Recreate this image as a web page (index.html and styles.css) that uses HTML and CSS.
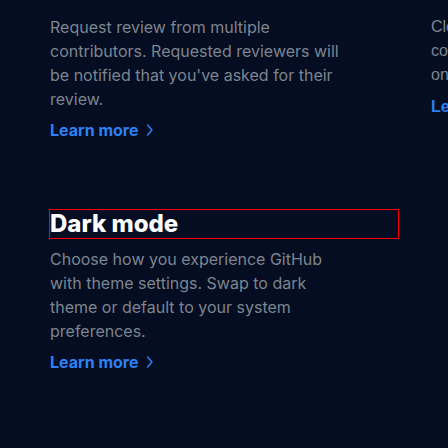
FILE: index.html
```html
<!DOCTYPE html>
<html lang="en">
<head>
<meta charset="utf-8">
<title>Features</title>
<link rel="stylesheet" href="styles.css">
</head>
<body>
<main class="grid">
  <section class="card">
    <p class="desc">Request review from multiple contributors. Requested reviewers will be notified that you've asked for their review.</p>
    <a class="link" href="#">Learn more <svg class="chev" width="16" height="16" viewBox="0 0 16 16"><path d="M6.5 3l4.5 5-4.5 5" fill="none" stroke="currentColor" stroke-width="1.4" stroke-linecap="round" stroke-linejoin="round"/></svg></a>
  </section>
  <section class="card alt">
    <p class="desc">Clearly define who is responsible for code and automatically request reviews on each pull request.</p>
    <a class="link" href="#">Learn more</a>
  </section>
  <section class="card">
    <h3 class="title">Dark mode</h3>
    <p class="desc">Choose how you experience GitHub with theme settings. Swap to dark theme or default to your system preferences.</p>
    <a class="link" href="#">Learn more <svg class="chev" width="16" height="16" viewBox="0 0 16 16"><path d="M6.5 3l4.5 5-4.5 5" fill="none" stroke="currentColor" stroke-width="1.4" stroke-linecap="round" stroke-linejoin="round"/></svg></a>
  </section>
</main>
</body>
</html>
```
FILE: styles.css
```css
html, body {
  margin: 0;
  background: #040d21;
}
body {
  font-family: Inter, "Noto Sans", sans-serif;
  overflow: hidden;
}
.grid {
  display: grid;
  grid-template-columns: 350px 350px;
  column-gap: 31px;
  row-gap: 68px;
  padding: 15px 0 0 50px;
}
.card {
  display: flex;
  flex-direction: column;
  align-items: flex-start;
}
.desc {
  margin: 0;
  font-size: 16px;
  line-height: 24px;
  color: #7d8590;
  width: 290px;
}
.link {
  margin-top: 7px;
  display: flex;
  align-items: center;
  gap: 3px;
  font-size: 16px;
  line-height: 24px;
  font-weight: 700;
  color: #2f81f7;
  text-decoration: none;
}
.chev {
  display: block;
}
.alt .desc, .alt .link {
  font-family: "Liberation Sans", Arial, sans-serif;
}
.alt .link {
  margin-top: 8px;
}
.title {
  width: 348px;
  margin: 0 0 9px;
  font-size: 24px;
  line-height: 28px;
  font-weight: 800;
  color: #ffffff;
  outline: 1px solid #ff0000;
}
```
